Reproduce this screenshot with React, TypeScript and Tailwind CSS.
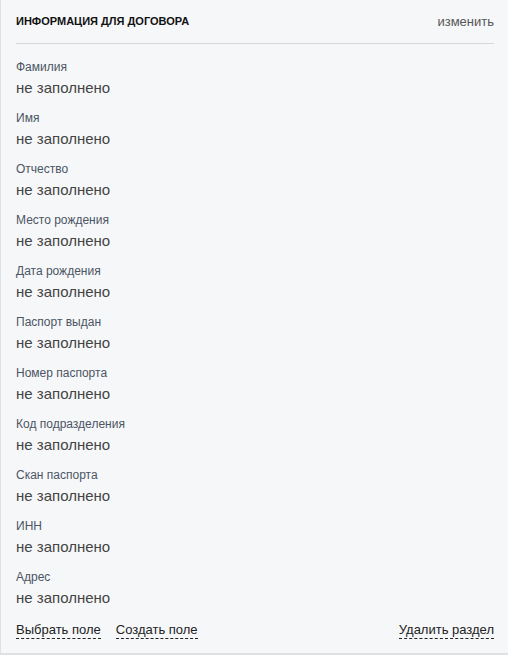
import React from 'react';

const fields = [
    'Фамилия',
    'Имя',
    'Отчество',
    'Место рождения',
    'Дата рождения',
    'Паспорт выдан',
    'Номер паспорта',
    'Код подразделения',
    'Скан паспорта',
    'ИНН',
    'Адрес',
];

const DashedLink: React.FC<{ children: React.ReactNode }> = ({ children }) => (
    <span className="cursor-pointer border-b border-dashed border-[#222] text-[13px] leading-[16px] text-[#222]">
        {children}
    </span>
);

export default function App() {
    return (
        <div className="h-[655px] w-[508px] border-b-2 border-l border-[#dde1e4] bg-[#f6f7f9] font-['Liberation_Sans',Arial,sans-serif]">
            <div className="pl-[15px] pr-[14px]">
                <div className="flex h-[44px] items-center justify-between border-b border-[#d3d8dc]">
                    <h2 className="text-[11px] font-bold uppercase text-[#111]">Информация для договора</h2>
                    <button className="text-[13px] text-[#555]">изменить</button>
                </div>

                <div className="flex flex-col gap-3 pt-[15px]">
                    {fields.map(label => (
                        <div key={label} className="flex flex-col">
                            <span className="text-[12px] leading-[16px] text-[#4b5563]">{label}</span>
                            <span className="mt-[3px] text-[15px] leading-[20px] text-[#444]">не заполнено</span>
                        </div>
                    ))}
                </div>

                <div className="mt-[14px] flex items-center justify-between">
                    <div className="flex gap-[15px]">
                        <DashedLink>Выбрать поле</DashedLink>
                        <DashedLink>Создать поле</DashedLink>
                    </div>
                    <DashedLink>Удалить раздел</DashedLink>
                </div>
            </div>
        </div>
    );
}
